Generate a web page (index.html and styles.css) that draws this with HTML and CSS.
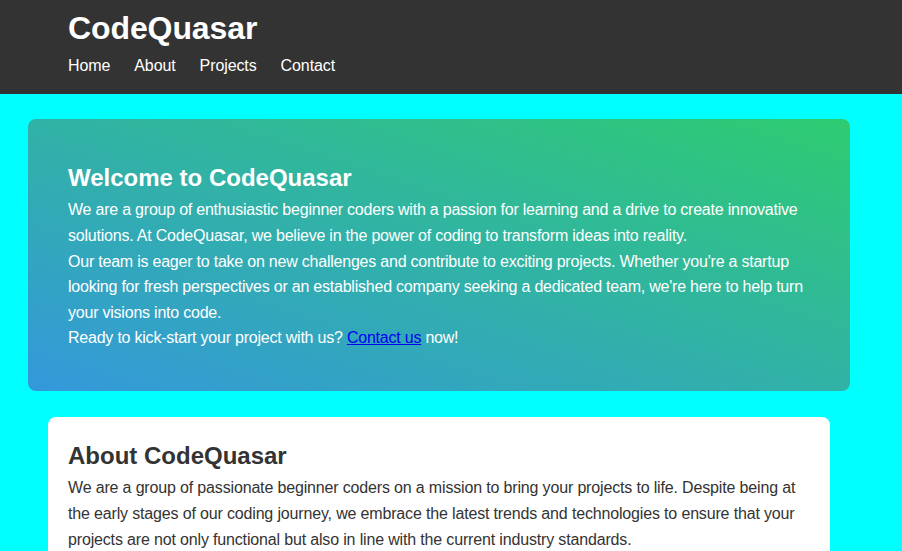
FILE: index.html
```html
<!DOCTYPE html>
<html lang="en">
<head>
<meta charset="utf-8">
<title>CodeQuasar</title>
<link rel="stylesheet" href="styles.css">
</head>
<body>
<header class="site-header">
  <h1 class="logo">CodeQuasar</h1>
  <nav>
    <ul class="nav-list">
      <li><a href="#">Home</a></li>
      <li><a href="#">About</a></li>
      <li><a href="#">Projects</a></li>
      <li><a href="#">Contact</a></li>
    </ul>
  </nav>
</header>
<main class="main">
  <section class="hero">
    <h2 class="hero-title">Welcome to CodeQuasar</h2>
    <p>We are a group of enthusiastic beginner coders with a passion for learning and a drive to create innovative solutions. At CodeQuasar, we believe in the power of coding to transform ideas into reality.</p>
    <p>Our team is eager to take on new challenges and contribute to exciting projects. Whether you're a startup looking for fresh perspectives or an established company seeking a dedicated team, we're here to help turn your visions into code.</p>
    <p>Ready to kick-start your project with us? <a class="contact-link" href="#">Contact us</a> now!</p>
  </section>
  <section class="card">
    <h2 class="card-title">About CodeQuasar</h2>
    <p>We are a group of passionate beginner coders on a mission to bring your projects to life. Despite being at the early stages of our coding journey, we embrace the latest trends and technologies to ensure that your projects are not only functional but also in line with the current industry standards.</p>
  </section>
</main>
</body>
</html>
```
FILE: styles.css
```css
html, body {
  margin: 0;
  padding: 0;
}
body {
  background: #00ffff;
  font-family: "Liberation Sans", Arial, sans-serif;
  font-size: 16px;
  line-height: 1.6;
  color: #333;
}
.site-header {
  background: #333;
  color: #fff;
  padding: 10px 68px;
  height: 74px;
}
.logo {
  margin: 0;
  font-size: 32px;
  line-height: normal;
  font-weight: bold;
  letter-spacing: -0.1px;
}
.nav-list {
  list-style: none;
  margin: 10px 0 0;
  padding: 0;
  display: flex;
  gap: 24px;
  line-height: normal;
  letter-spacing: -0.1px;
}
.nav-list a {
  color: #fff;
  text-decoration: none;
}
.main {
  padding: 25px 52px 0 28px;
  display: flex;
  flex-direction: column;
  gap: 26px;
}
.hero {
  background: linear-gradient(to top right, #3498db, #2ecc71);
  color: #fff;
  border-radius: 8px;
  padding: 40px;
}
.hero-title {
  margin: 0;
  font-size: 24px;
}
.hero p {
  margin: 0;
  letter-spacing: -0.22px;
}
.contact-link {
  color: #0000ee;
}
.card {
  background: #fff;
  border-radius: 8px;
  margin: 0 20px;
  padding: 20px;
  min-height: 200px;
}
.card-title {
  margin: 0;
  font-size: 24px;
}
.card p {
  margin: 0;
  letter-spacing: -0.16px;
}
```
